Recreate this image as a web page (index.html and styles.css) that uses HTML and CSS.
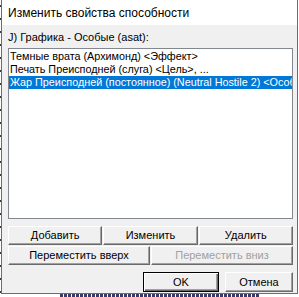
FILE: index.html
```html
<!DOCTYPE html>
<html>
<head>
<meta charset="utf-8">
<link rel="stylesheet" href="styles.css">
</head>
<body>
<div class="screen">
  <div class="edge"></div>
  <div class="win">
    <div class="titlebar">Изменить свойства способности</div>
    <div class="client">
      <div class="label">J) Графика - Особые (asat):</div>
      <div class="listbox">
        <div class="item">Темные врата (Архимонд) &lt;Эффект&gt;</div>
        <div class="item">Печать Преисподней (слуга) &lt;Цель&gt;, ...</div>
        <div class="item selected">Жар Преисподней (постоянное) (Neutral Hostile 2) &lt;Особые&gt;</div>
      </div>
      <div class="row three">
        <button class="btn">Добавить</button>
        <button class="btn">Изменить</button>
        <button class="btn">Удалить</button>
      </div>
      <div class="row two">
        <button class="btn">Переместить вверх</button>
        <button class="btn disabled">Переместить вниз</button>
      </div>
      <div class="footer">
        <button class="btn default ok">OK</button>
        <button class="btn cancel">Отмена</button>
      </div>
    </div>
  </div>
  <div class="under"></div>
</div>
</body>
</html>
```

FILE: styles.css
```css
html, body {
  margin: 0;
  padding: 0;
  background: #ffffff;
}
.screen {
  position: relative;
  width: 299px;
  height: 297px;
  overflow: hidden;
  background: #ffffff;
  font-family: "Liberation Sans", Arial, sans-serif;
  font-size: 11px;
  color: #000;
}
.edge {
  position: absolute;
  left: 0;
  top: 0;
  width: 1px;
  height: 297px;
  background: repeating-linear-gradient(to bottom, #ffffff 0 5px, #3a3a3a 5px 7px, #ffffff 7px 13px);
}
.win {
  margin-left: 1px;
  width: 295px;
  height: 293px;
  border-left: 1px solid #1883d7;
  border-right: 1px solid #1883d7;
  border-bottom: 1px solid #1883d7;
  display: flex;
  flex-direction: column;
}
.titlebar {
  height: 25px;
  background: #ffffff;
  padding-left: 6px;
  font-size: 12px;
  line-height: 26px;
  box-sizing: border-box;
}
.client {
  flex: 1;
  background: #f0f0f0;
  padding: 0 4px 0 6px;
  display: flex;
  flex-direction: column;
}
.label {
  height: 23px;
  line-height: 15px;
  padding-top: 5px;
  box-sizing: border-box;
}
.listbox {
  height: 171px;
  box-sizing: border-box;
  border: 1px solid #828790;
  background: #ffffff;
  padding: 1px 0 0 0;
  overflow: hidden;
  font-size: 10.8px;
}
.item {
  height: 13px;
  line-height: 13px;
  padding-left: 1px;
  white-space: nowrap;
  overflow: hidden;
}
.item.selected {
  background: #0078d7;
  color: #ffffff;
}
.row {
  display: grid;
  gap: 1px;
  height: 19px;
}
.row.three {
  margin-top: 7px;
  grid-template-columns: 1fr 1fr 1fr;
}
.row.two {
  margin-top: 1px;
  grid-template-columns: 1fr 1fr;
}
.btn {
  font-family: "Liberation Sans", Arial, sans-serif;
  font-size: 11px;
  color: #000;
  background: #f0f0f0;
  margin: 0;
  padding: 0;
  box-sizing: border-box;
  border: 1px solid;
  border-color: #ffffff #696969 #696969 #ffffff;
  box-shadow: inset -1px -1px 0 #a0a0a0;
  height: 100%;
  line-height: 15px;
}
.btn.disabled {
  color: #a0a0a0;
}
.footer {
  margin-top: 7px;
  display: flex;
  justify-content: flex-end;
  gap: 6px;
  height: 20px;
}
.btn.ok {
  width: 76px;
}
.btn.cancel {
  width: 68px;
}
.btn.default {
  border: 1px solid #000;
  box-shadow: inset 1px 1px 0 #ffffff, inset -1px -1px 0 #696969, inset -2px -2px 0 #a0a0a0;
}
.under {
  position: absolute;
  left: 60px;
  top: 294px;
  width: 200px;
  height: 3px;
  background: repeating-linear-gradient(to right, #3a3a6a 0 3px, #ffffff 3px 4px);
}
```
